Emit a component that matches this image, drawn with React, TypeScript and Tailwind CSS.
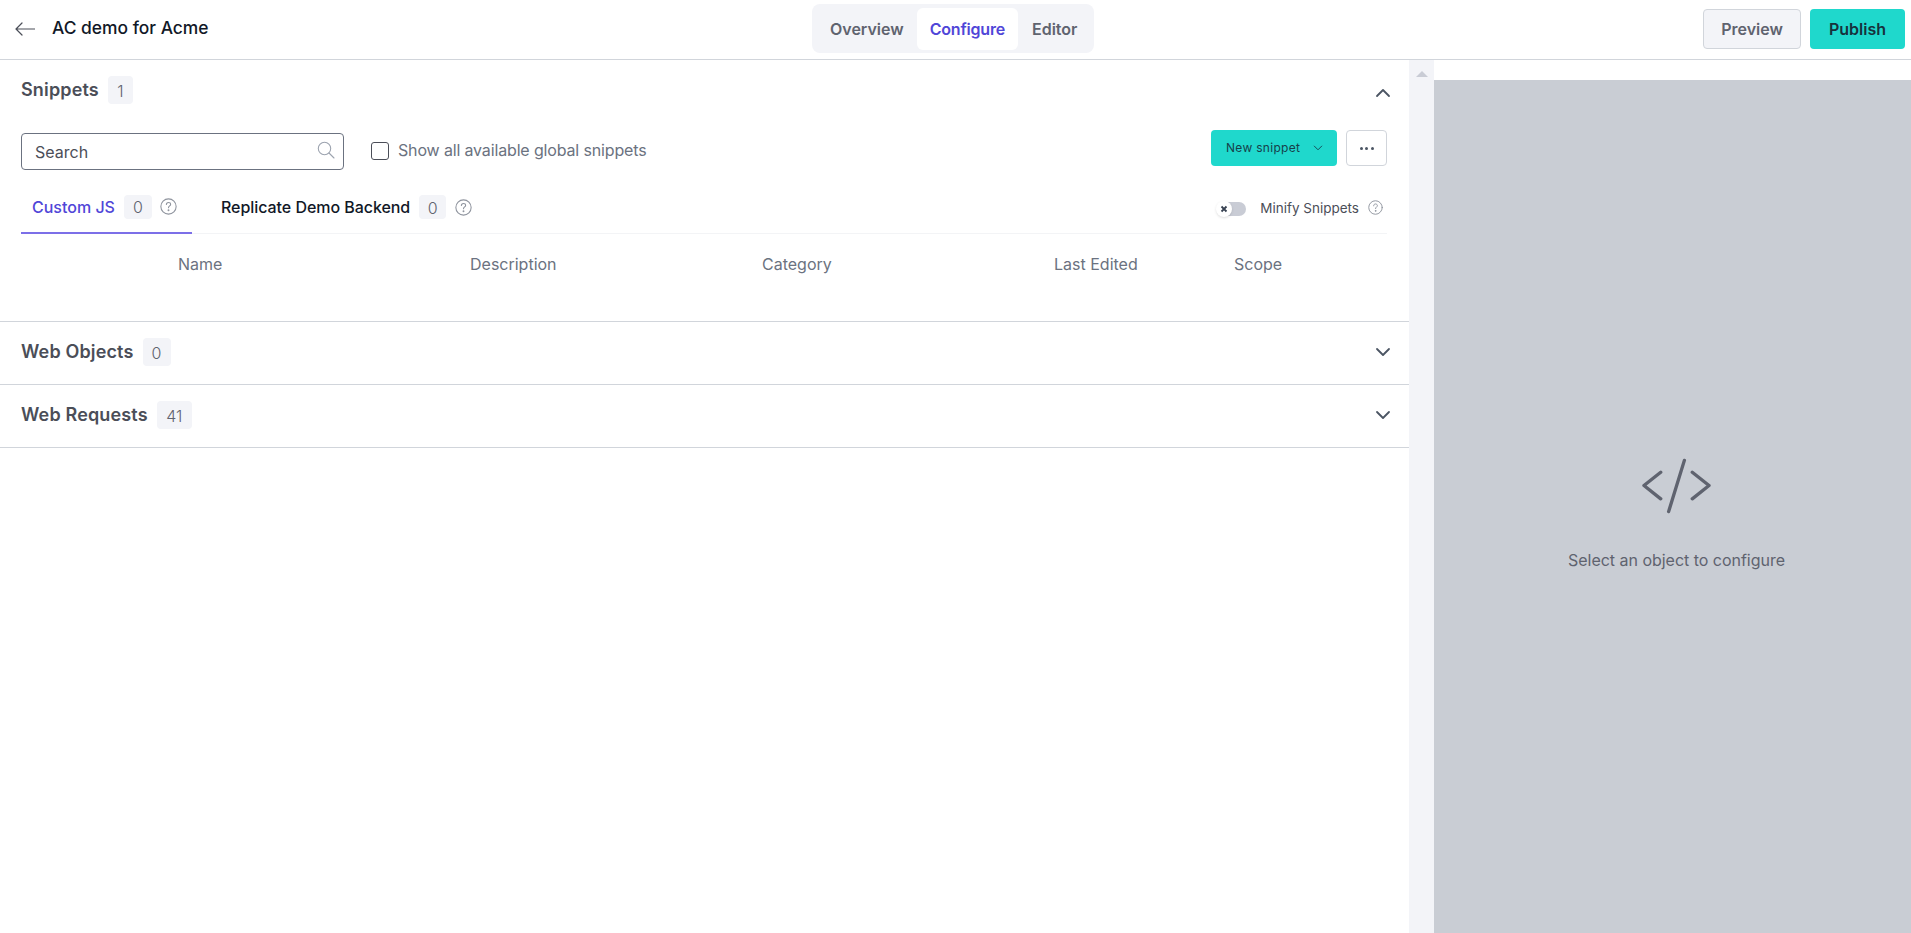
import React from "react";

function Chevron({ up }: { up?: boolean }) {
  return (
    <svg width="16" height="10" viewBox="0 0 16 10" fill="none" stroke="#4b5563" strokeWidth="1.8" strokeLinecap="round" strokeLinejoin="round" className={up ? "mt-[6px]" : ""}>
      <path d={up ? "M2 8 L8 2 L14 8" : "M2 2 L8 8 L14 2"} />
    </svg>
  );
}

function Help({ size = 17 }: { size?: number }) {
  return (
    <svg width={size} height={size} viewBox="0 0 16 16" fill="none" stroke="#8f949e" strokeWidth="1" strokeLinecap="round" strokeLinejoin="round" className="shrink-0">
      <circle cx="8" cy="8" r="7.2" />
      <path d="M6 6.2 C6 4.9 7 4.2 8 4.2 C9.1 4.2 10 5 10 6 C10 7.4 8 7.5 8 9.2" />
      <circle cx="8" cy="11.6" r="0.4" fill="#8f949e" />
    </svg>
  );
}

function Count({ children, className }: { children: React.ReactNode; className: string }) {
  return (
    <span className={"flex items-center justify-center rounded bg-[#f3f4f8] pt-px text-base font-light text-[#5f636f] " + className}>
      {children}
    </span>
  );
}

function SectionRow({ title, count, badge }: { title: string; count: string; badge: string }) {
  return (
    <div className="flex h-[63px] items-center justify-between border-b border-[#d1d5db] pb-[2px] pl-[21px] pr-[18px]">
      <div className="flex items-center gap-[9px]">
        <span className="text-lg font-semibold tracking-[0.15px] text-[#4b4e58]">{title}</span>
        <Count className={badge}>{count}</Count>
      </div>
      <Chevron />
    </div>
  );
}

export default function App() {
  return (
    <div className="flex h-[933px] flex-col overflow-hidden bg-white font-['Inter',sans-serif]">
      <header className="flex h-[60px] shrink-0 items-start border-b border-[#d1d5db]">
        <div className="flex h-[57px] w-[812px] shrink-0 items-center pl-[15px]">
          <svg width="20" height="14" viewBox="0 0 20 14" fill="none" stroke="#4b4e58" strokeWidth="1.2" strokeLinecap="round" strokeLinejoin="round">
            <path d="M19.5 7 H1 M7 1 L1 7 L7 13" />
          </svg>
          <span className="ml-[17px] text-[17.4px] font-medium text-[#111827]">AC demo for Acme</span>
        </div>
        <nav className="mt-1 flex h-[49px] items-center rounded-lg bg-[#f3f4f8] p-1 text-base font-semibold">
          <span className="pl-[14px] pr-[13px] text-[#5f636f]">Overview</span>
          <span className="flex h-[42px] items-center rounded-md bg-white px-[13px] tracking-[-0.2px] text-[#5046d8]">Configure</span>
          <span className="pl-[14px] pr-[13px] text-[#5f636f]">Editor</span>
        </nav>
        <div className="mt-[9px] flex flex-1 justify-end gap-[9px] pr-1.5 text-base font-semibold">
          <button className="h-10 w-[98px] rounded border border-[#d1d5db] bg-[#f3f4f8] text-[#5f636f]">Preview</button>
          <button className="h-10 w-[95px] rounded bg-[#1fd8cc] text-[#17323c]">Publish</button>
        </div>
      </header>

      <div className="flex min-h-0 flex-1">
        <main className="w-[1409px] shrink-0">
          <section className="h-[262px] border-b border-[#d1d5db]">
            <div className="flex h-[60px] items-center justify-between pl-[21px] pr-[18px]">
              <div className="flex items-center gap-[9px]">
                <span className="text-lg font-semibold tracking-[0.15px] text-[#4b4e58]">Snippets</span>
                <Count className="h-7 w-[25px]">1</Count>
              </div>
              <Chevron up />
            </div>

            <div className="mx-[21px] mt-[10px] w-[1366px]">
              <div className="flex h-10 items-start">
                <div className="mt-[3px] flex h-[37px] w-[323px] items-center justify-between rounded border border-[#6b7280] pl-[13px] pr-[8px]">
                  <span className="text-base text-[#4b4e58]">Search</span>
                  <svg width="18" height="18" viewBox="0 0 18 18" fill="none" stroke="#9ca3af" strokeWidth="1.1" strokeLinecap="round" className="mb-[3px]">
                    <circle cx="7.5" cy="7.5" r="6.2" />
                    <path d="M12 12 L17 17" />
                  </svg>
                </div>
                <div className="ml-[27px] mt-3 h-[18px] w-[18px] rounded-[3px] border border-[#4b4e58]" />
                <span className="ml-[9px] mt-[8px] text-base tracking-[-0.15px] text-[#6b7280]">Show all available global snippets</span>
                <div className="ml-auto flex gap-[9px]">
                  <button className="flex h-9 w-[126px] items-center gap-[13px] rounded bg-[#1fd8cc] pl-[15px] text-xs font-normal tracking-[0.3px] text-[#17404a]">
                    New snippet
                    <svg width="10" height="6" viewBox="0 0 10 6" fill="none" stroke="#17505a" strokeWidth="1">
                      <path d="M1 0.8 L5 4.8 L9 0.8" />
                    </svg>
                  </button>
                  <button className="flex h-9 w-[41px] items-center justify-center gap-[2.5px] rounded border border-[#d1d5db] bg-white">
                    <span className="h-[3px] w-[3px] rounded-full bg-[#4b5563]" />
                    <span className="h-[3px] w-[3px] rounded-full bg-[#4b5563]" />
                    <span className="h-[3px] w-[3px] rounded-full bg-[#4b5563]" />
                  </button>
                </div>
              </div>

              <div className="mt-[10px] flex h-[54px] items-stretch border-b border-[#f3f4f6]">
                <div className="-mb-px flex items-center gap-[8px] border-b-2 border-[#7c6fe8] pl-[11px] pr-[15px] pt-[1px]">
                  <span className="mr-px text-base font-medium text-[#5046d8]">Custom JS</span>
                  <Count className="h-[24px] w-[28px]">0</Count>
                  <Help />
                </div>
                <div className="ml-[13px] flex items-center gap-[9px] pl-4 pt-[1px]">
                  <span className="text-base font-medium tracking-[-0.05px] text-[#111827]">Replicate Demo Backend</span>
                  <Count className="h-[24px] w-[27px]">0</Count>
                  <Help />
                </div>
                <div className="ml-auto flex items-center pr-1 pt-[4px]">
                  <span className="relative h-[14px] w-[28px] rounded-full bg-[#c9ccd5]">
                    <span className="absolute -left-[2px] -top-px flex h-4 w-4 items-center justify-center rounded-full bg-white shadow">
                      <svg width="8" height="8" viewBox="0 0 8 8" stroke="#374151" strokeWidth="1.8">
                        <path d="M1.5 1.5 L6.5 6.5 M6.5 1.5 L1.5 6.5" />
                      </svg>
                    </span>
                  </span>
                  <span className="ml-[14px] text-[13.5px] text-[#4b4e58]">Minify Snippets</span>
                  <span className="ml-[9px] -mt-[3px]"><Help size={15} /></span>
                </div>
              </div>

              <div className="grid h-[60px] grid-cols-[292px_292px_292px_180px_1fr] items-center pb-[1px] pl-[157px] text-base text-[#6b7280]">
                <span>Name</span>
                <span>Description</span>
                <span>Category</span>
                <span>Last Edited</span>
                <span>Scope</span>
              </div>
            </div>
          </section>
          <SectionRow title="Web Objects" count="0" badge="h-7 w-[28px]" />
          <SectionRow title="Web Requests" count="41" badge="h-7 w-[35px]" />
        </main>

        <div className="flex w-[25px] shrink-0 justify-center bg-[#f3f4f8] pt-[11px]">
          <svg width="12" height="6" viewBox="0 0 12 6" fill="#c9ccd5"><path d="M6 0 L12 6 H0 Z" /></svg>
        </div>

        <div className="flex flex-1 flex-col">
          <div className="h-5 shrink-0 bg-white" />
          <div className="flex flex-1 flex-col items-center bg-[#c9cdd4] pl-2 pt-[378px]">
            <svg width="69" height="56" viewBox="0 0 70 56" fill="none" stroke="#5f636f" strokeWidth="3.4" strokeLinecap="round" strokeLinejoin="round">
              <path d="M19 14 L2 27.5 L19 41 M51 14 L68 27.5 L51 41 M43 2 L27 54" />
            </svg>
            <span className="mt-[34px] text-base tracking-[-0.02px] text-[#5f636f]">Select an object to configure</span>
          </div>
        </div>
      </div>
    </div>
  );
}
